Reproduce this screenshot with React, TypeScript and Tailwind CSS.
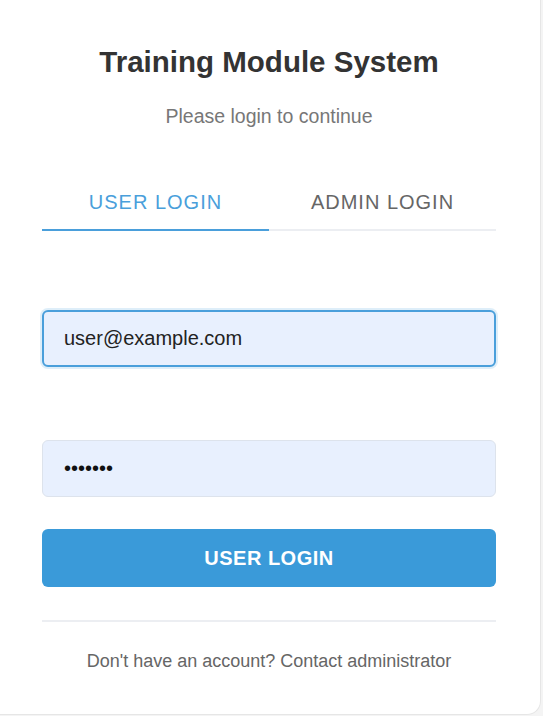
export default function App() {
  return (
    <div className="min-h-screen bg-[#f4f4f4] font-['Liberation_Sans',Arial,sans-serif]">
      <div className="w-[541px] h-[715px] bg-white rounded-br-[14px] border-r border-b border-[#e6e6e6] pl-[42px] pr-[44px] pt-[42px]">
        <h1 className="text-center text-[29.5px] leading-[40px] font-bold text-[#333]">
          Training Module System
        </h1>
        <p className="mt-[21px] text-center text-[19.5px] leading-[26px] text-[#777]">
          Please login to continue
        </p>

        <div className="mt-[52px] flex">
          <button className="flex-1 h-[50px] pb-[6px] text-[20px] tracking-[1px] text-[#4a9fdb] border-b-2 border-[#4a9fdb]">
            USER LOGIN
          </button>
          <button className="flex-1 h-[50px] pb-[6px] text-[20px] tracking-[1px] text-[#666] border-b-2 border-[#eceef2]">
            ADMIN LOGIN
          </button>
        </div>

        <div className="mt-[79px]">
          <input
            readOnly
            type="email"
            defaultValue="user@example.com"
            className="w-full h-[57px] rounded-[6px] bg-[#e8f0fe] border-2 border-[#4a9fdb] shadow-[0_0_0_2px_rgba(74,159,219,0.18)] px-[20px] text-[20px] text-[#222] outline-none"
          />
        </div>

        <div className="mt-[73px]">
          <input
            readOnly
            type="password"
            defaultValue="1234567"
            className="w-full h-[57px] rounded-[6px] bg-[#e8f0fe] border border-[#dde3ec] px-[21px] text-[20px] text-[#111] outline-none"
          />
        </div>

        <button className="mt-[32px] w-full h-[58px] rounded-[6px] bg-[#3a9ad9] text-white text-[20px] font-bold tracking-[0.5px]">
          USER LOGIN
        </button>

        <div className="mt-[33px] h-[2px] bg-[#eceef2]" />

        <p className="mt-[27px] text-center text-[18px] leading-[24px] text-[#666]">
          Don't have an account? Contact administrator
        </p>
      </div>
    </div>
  )
}
